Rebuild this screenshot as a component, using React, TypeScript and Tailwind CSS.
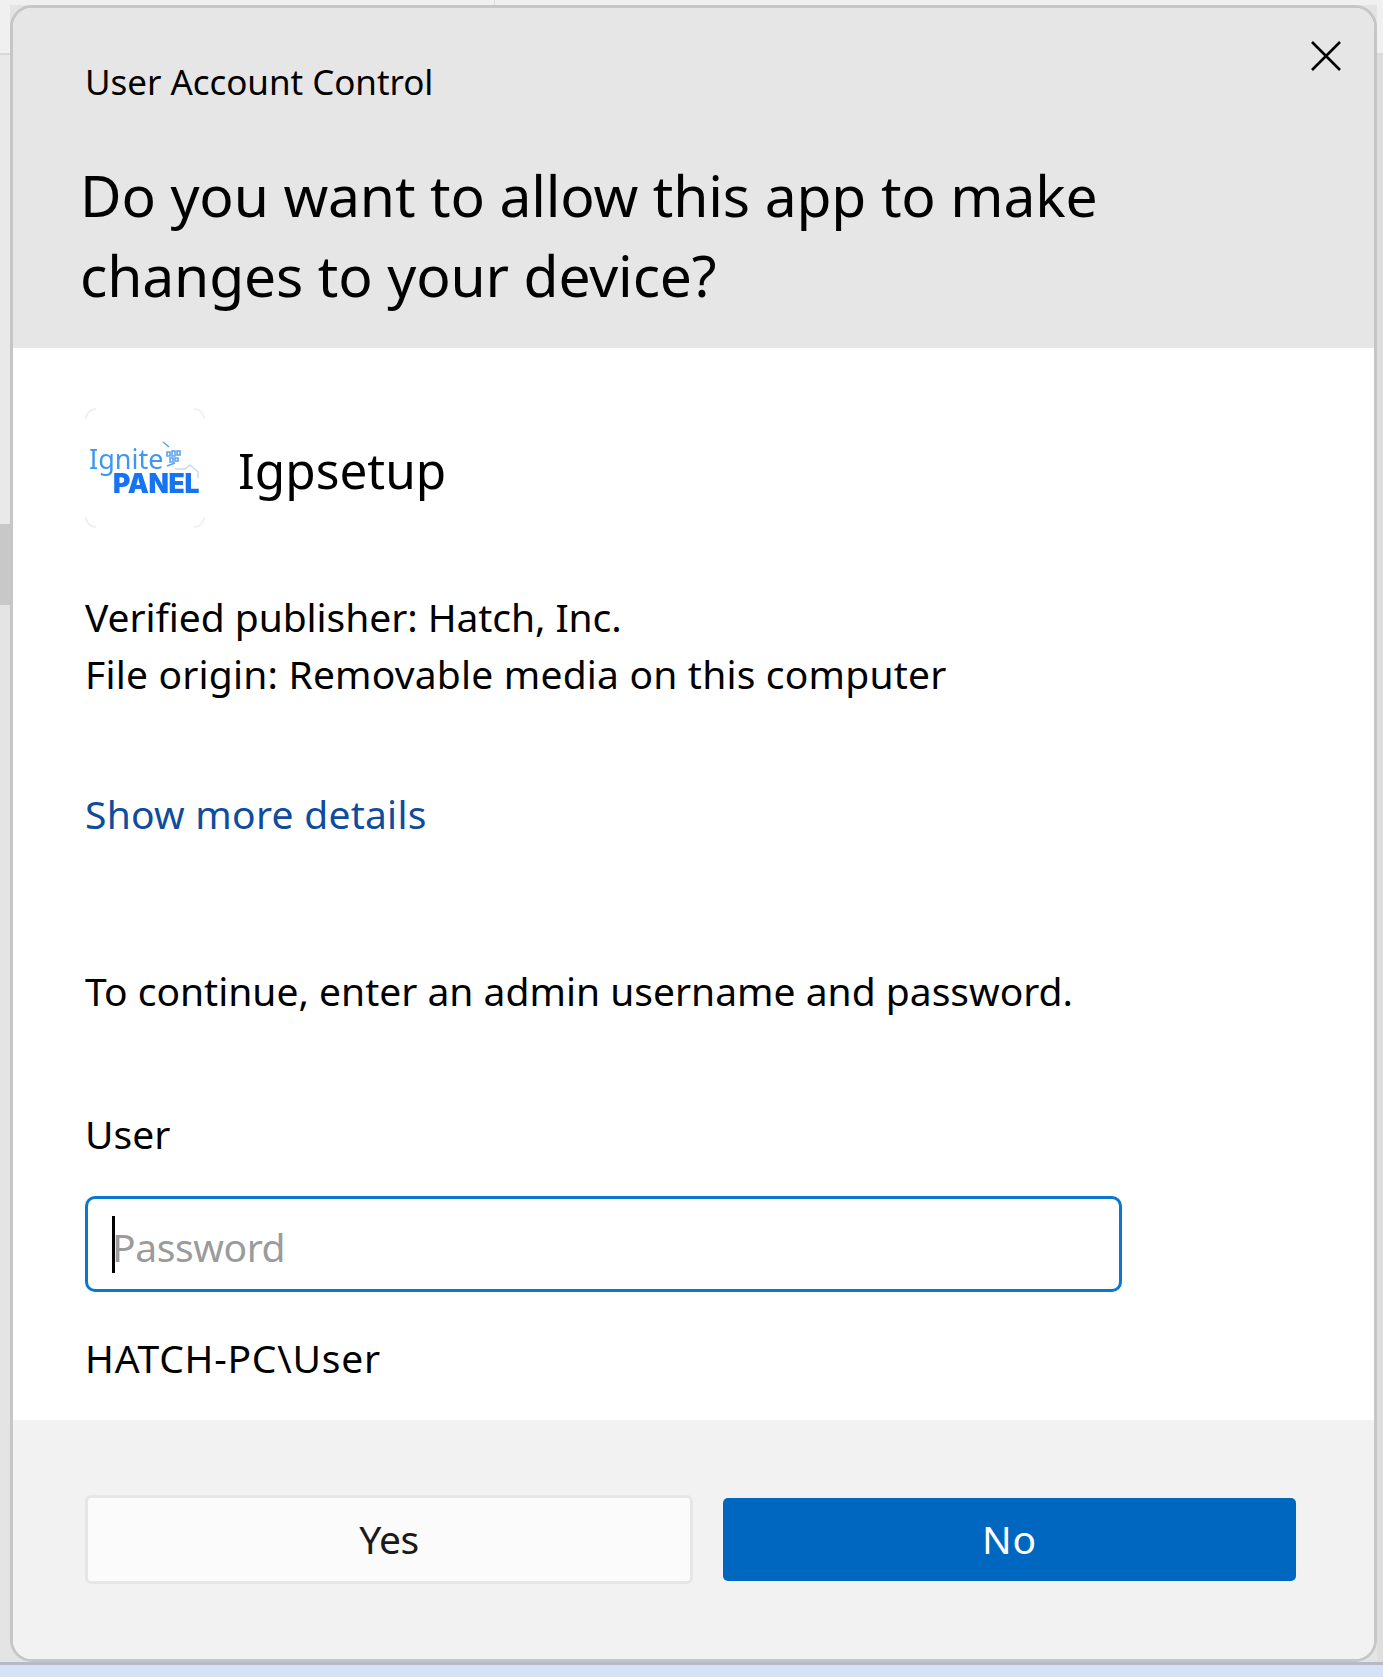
import React from 'react';

const Logo: React.FC = () => {
  return (
    <div className="relative w-[120px] h-[120px] shrink-0">
      {/* the icon tile only shows at its corners */}
      <svg className="absolute left-0 top-0" width="120" height="120" viewBox="0 0 120 120" fill="none">
        <path d="M1 11a10 10 0 0 1 10-10M109 1a10 10 0 0 1 10 10M119 109a10 10 0 0 1-10 10M11 119a10 10 0 0 1-10-10" stroke="#f1f1f1" strokeWidth="2" />
      </svg>
      <div className="absolute left-[4px] top-[39px] text-[27px] leading-[24px] text-[#3f97f2] blur-[0.5px]">Ignite</div>
      <div className="absolute left-[28px] top-[65px] text-[26.5px] leading-[20px] font-black text-[#1674f3] blur-[0.7px] tracking-[-0.3px] font-['Inter',sans-serif]">PANEL</div>
      <svg className="absolute left-[74px] top-[30px] blur-[0.5px]" width="44" height="40" viewBox="0 0 44 40" fill="none">
        <path d="M4 4l6 5M8 14h3v4H8zM13 13h3v5h-3zM18 13h3v4h-3zM11 20h3v4h-3zM16 20h3v3h-3zM8 28l8-3" stroke="#5ba4f0" strokeWidth="1.6" />
        <path d="M16 31h10l5-4 8 7v6" stroke="#c9dcf6" strokeWidth="1.5" />
      </svg>
    </div>
  );
};

const App: React.FC = () => {
  return (
    <div className="w-[1383px] h-[1677px] flex flex-col bg-[#e4e4e4] text-black overflow-hidden font-['Noto_Sans',sans-serif]">
      <div className="h-[5px] flex shrink-0 bg-[#f0f0f0]">
        <div className="w-[495px] border-r border-[#dcdcdc]" />
      </div>

      <div className="h-[1657px] flex shrink-0">
        <div className="w-[10px] flex flex-col shrink-0">
          <div className="h-[50px] bg-[#f0f0f0] border-b-2 border-[#d8d8d8]" />
          <div className="h-[469px] bg-[#e9e9e9]" />
          <div className="h-[81px] bg-[#c8c8c8]" />
          <div className="flex-1 bg-[#e4e4e4]" />
        </div>

        <div className="w-[1367px] flex flex-col shrink-0 border-[3px] border-[#c6c6c6] rounded-[22px] overflow-hidden bg-white">
          <div className="relative h-[340px] shrink-0 bg-[#e6e6e6] pt-[54px]">
            <div className="pl-[72px] text-[35px] leading-[40px] tracking-[-0.05px]">User Account Control</div>
            <h1 className="pl-[67px] mt-[53px] text-[57px] leading-[80px] font-normal tracking-[-0.16px]">
              Do you want to allow this app to make<br />changes to your device?
            </h1>
            <button className="absolute top-[33px] right-[33px]" aria-label="Close">
              <svg className="block" width="30" height="30" viewBox="0 0 30 30" fill="none">
                <path d="M1 1l28 28M29 1L1 29" stroke="#000" strokeWidth="2.6" />
              </svg>
            </button>
          </div>

          <div className="h-[1072px] shrink-0 bg-white pl-[72px] pt-[60px] text-[39px] leading-[57px]">
            <div className="flex items-center h-[120px]">
              <Logo />
              <div className="ml-[33px] pt-[5px] text-[49.5px]">Igpsetup</div>
            </div>
            <div className="mt-[60px]">
              <div className="tracking-[-0.07px]">Verified publisher: Hatch, Inc.</div>
              <div className="tracking-[0.19px]">File origin: Removable media on this computer</div>
            </div>
            <a className="block mt-[83px] text-[#0f4c9e] tracking-[0.25px]">Show more details</a>
            <div className="mt-[120px]">To continue, enter an admin username and password.</div>
            <div className="mt-[86px]">User</div>
            <div className="mt-[34px] w-[1037px] h-[96px] border-[3px] border-[#0a77d0] rounded-[10px] flex items-center pl-[24px]">
              <div className="w-[3px] h-[57px] bg-black shrink-0" />
              <span className="-ml-[3px] pt-[4px] text-[#9b9b9b] tracking-[-0.4px]">Password</span>
            </div>
            <div className="mt-[37px] tracking-[0.74px]">HATCH-PC\User</div>
          </div>

          <div className="flex-1 bg-[#f2f2f2] pl-[72px] pt-[75px]">
            <div className="flex items-center gap-[30px] text-[39px]">
              <button className="w-[608px] h-[89px] bg-[#fbfbfb] border-[3px] border-[#e6e6e6] rounded-[6px] text-[#1a1a1a] tracking-[-0.5px]">Yes</button>
              <button className="w-[573px] h-[83px] bg-[#0067c0] rounded-[5px] text-white tracking-[1px]">No</button>
            </div>
          </div>
        </div>

        <div className="w-[6px] shrink-0 flex flex-col">
          <div className="h-[50px] bg-[#f0f0f0] border-b-2 border-[#d8d8d8]" />
          <div className="flex-1 bg-[#dedede]" />
        </div>
      </div>

      <div className="flex-1 bg-[#d7e1f5] border-t-[3px] border-[#b6bac6]" />
    </div>
  );
};

export default App;
